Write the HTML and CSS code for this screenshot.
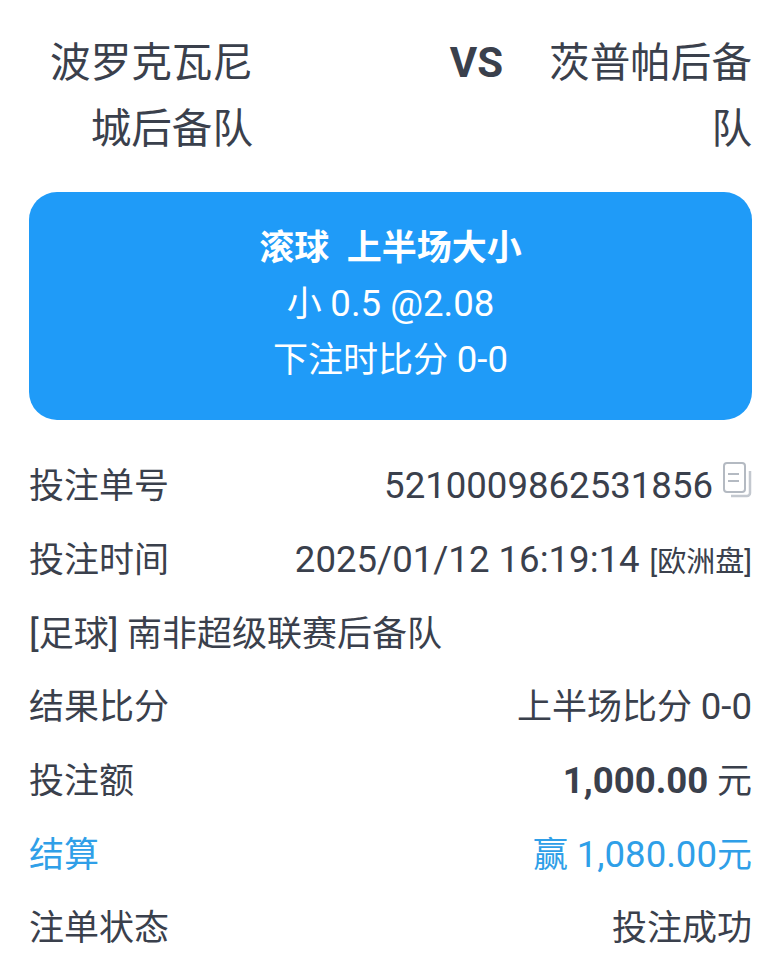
FILE: index.html
```html
<!DOCTYPE html>
<html lang="zh-CN">

<head>
    <meta charset="UTF-8">
    <title>注单详情</title>
    <link rel="stylesheet" href="styles.css">
</head>

<body>
    <div class="teams">
        <div class="team home">波罗克瓦尼城后备队</div>
        <div class="vs">VS</div>
        <div class="team away">茨普帕后备队</div>
    </div>

    <div class="bet-card">
        <p class="bet-title">滚球&nbsp;&nbsp;上半场大小</p>
        <p>小 <span class="num">0.5 @2.08</span></p>
        <p>下注时比分 <span class="num">0-0</span></p>
    </div>

    <ul class="info-list">
        <li class="row">
            <span>投注单号</span>
            <span class="value">
                <span class="num">5210009862531856</span>
                <svg class="copy" width="29" height="36" viewBox="0 0 29 36">
                    <path d="M4 1h15a3 3 0 0 1 3 3v23a3 3 0 0 1-3 3H4a3 3 0 0 1-3-3V4a3 3 0 0 1 3-3z" fill="#fff" stroke="#b4bac2" stroke-width="2" />
                    <path d="M27 9v22a3 3 0 0 1-3 3H8" fill="none" stroke="#c3c8cf" stroke-width="2.5" />
                    <path d="M5 12h11M5 19h11" stroke="#b4bac2" stroke-width="2" />
                </svg>
            </span>
        </li>
        <li class="row">
            <span>投注时间</span>
            <span class="value"><span class="num">2025/01/12 16:19:14</span> <small>[欧洲盘]</small></span>
        </li>
        <li class="row">
            <span><span class="num">[</span>足球<span class="num">]</span> 南非超级联赛后备队</span>
        </li>
        <li class="row">
            <span>结果比分</span>
            <span class="value"><span>上半场比分 <span class="num">0-0</span></span></span>
        </li>
        <li class="row">
            <span>投注额</span>
            <span class="value"><span><b class="num">1,000.00</b> 元</span></span>
        </li>
        <li class="row blue">
            <span>结算</span>
            <span class="value"><span>赢 <span class="num">1,080.00</span>元</span></span>
        </li>
        <li class="row">
            <span>注单状态</span>
            <span class="value">投注成功</span>
        </li>
    </ul>
</body>

</html>
```

FILE: styles.css
```css
* {
    margin: 0;
    padding: 0;
    box-sizing: border-box;
}

ul {
    list-style: none;
}

body {
    width: 781px;
    padding: 30px 29px 0 29px;
    background-color: #fff;
    color: #3a404c;
    font-family: "Roboto", "Noto Sans CJK SC", sans-serif;
    font-size: 35px;
}

.num {
    font-size: 36.6px;
}

.teams {
    display: flex;
    align-items: flex-start;
    font-size: 40.6px;
    line-height: 66px;
}

.team {
    width: 204px;
    text-align: right;
}

.home {
    width: 224px;
}

.vs {
    margin-left: auto;
    margin-right: 45px;
    font-size: 42px;
    font-weight: 700;
}

.bet-card {
    height: 228px;
    margin-top: 30px;
    padding-top: 29px;
    background-color: #1f9bf8;
    border-radius: 28px;
    color: #fff;
    text-align: center;
    line-height: 55px;
}

.bet-title {
    font-size: 35px;
    font-weight: 700;
}

.info-list {
    margin-top: 29px;
}

.row {
    display: flex;
    justify-content: space-between;
    align-items: baseline;
    height: 73.8px;
    line-height: 73.8px;
}

.value {
    display: flex;
    align-items: baseline;
    gap: 10px;
}

.value small {
    font-size: 29px;
}

.blue {
    color: #2f9fe8;
}
```
